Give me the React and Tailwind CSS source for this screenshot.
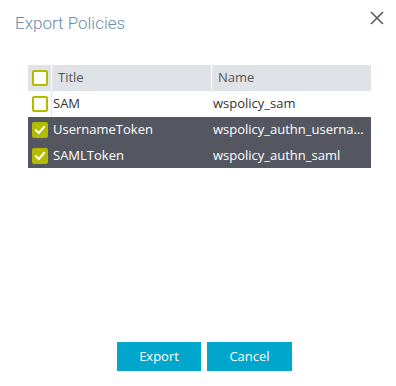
import React from "react";

const Box = ({ checked }) =>
  checked ? (
    <div className="w-[16px] h-[16px] rounded-[2px] bg-[#b3bb00] flex items-center justify-center">
      <svg width="12" height="12" viewBox="0 0 12 12">
        <path d="M2 6.2 L4.8 9 L10 3" fill="none" stroke="#fff" strokeWidth="2" strokeLinecap="square" />
      </svg>
    </div>
  ) : (
    <div className="w-[16px] h-[16px] rounded-[2px] border-2 border-[#b3bb00] bg-white" />
  );

const rows = [
  { t: "SAM", n: "wspolicy_sam", c: false },
  { t: "UsernameToken", n: "wspolicy_authn_username", c: true },
  { t: "SAMLToken", n: "wspolicy_authn_saml", c: true },
];

export default function App() {
  return (
    <div className="w-[396px] h-[386px] bg-white flex flex-col" style={{ fontFamily: "'Open Sans', sans-serif" }}>
      <div className="flex items-start justify-between pl-[15px] pr-[12px] pt-[10px] h-[65px]">
        <div className="text-[17px] leading-[22px] mt-[2px] text-[#6b8cae] font-light" style={{ fontFamily: "Roboto, sans-serif" }}>
          Export Policies
        </div>
        <svg width="14" height="14" viewBox="0 0 14 14" className="mt-[1px]">
          <path d="M1 1 L13 13 M13 1 L1 13" stroke="#5a5a5a" strokeWidth="1.6" />
        </svg>
      </div>
      <div className="ml-[28px] w-[343px] text-[13px]">
        <div className="flex h-[26px] bg-[#dfe2e6] text-[#555]">
          <div className="w-[24px] flex items-center justify-center border-r border-white"><Box checked={false} /></div>
          <div className="w-[160px] flex items-center pl-[6px] border-r border-white">Title</div>
          <div className="flex-1 flex items-center pl-[6px]">Name</div>
        </div>
        {rows.map((r, i) => (
          <div key={i} className={`flex ${i === 2 ? "h-[25px]" : "h-[26px]"} ${r.c ? "bg-[#545760] text-white" : "bg-white text-[#333]"}`}>
            <div className={`w-[24px] flex items-center justify-center ${r.c ? "" : "border-r border-[#e4e4e4]"}`}><Box checked={r.c} /></div>
            <div className="w-[160px] flex items-center pl-[1px]">{r.t}</div>
            <div className="flex-1 min-w-0 flex items-center pl-[1px] pr-[2px]">
              <span className="truncate">{r.n}</span>
            </div>
          </div>
        ))}
      </div>
      <div className="flex-1" />
      <div className="flex justify-center gap-[6px] pb-[15px] pl-[13px]">
        <button className="w-[84px] h-[29px] bg-[#00a6cc] text-white text-[13px]">Export</button>
        <button className="w-[85px] h-[29px] bg-[#00a6cc] text-white text-[13px]">Cancel</button>
      </div>
    </div>
  );
}
